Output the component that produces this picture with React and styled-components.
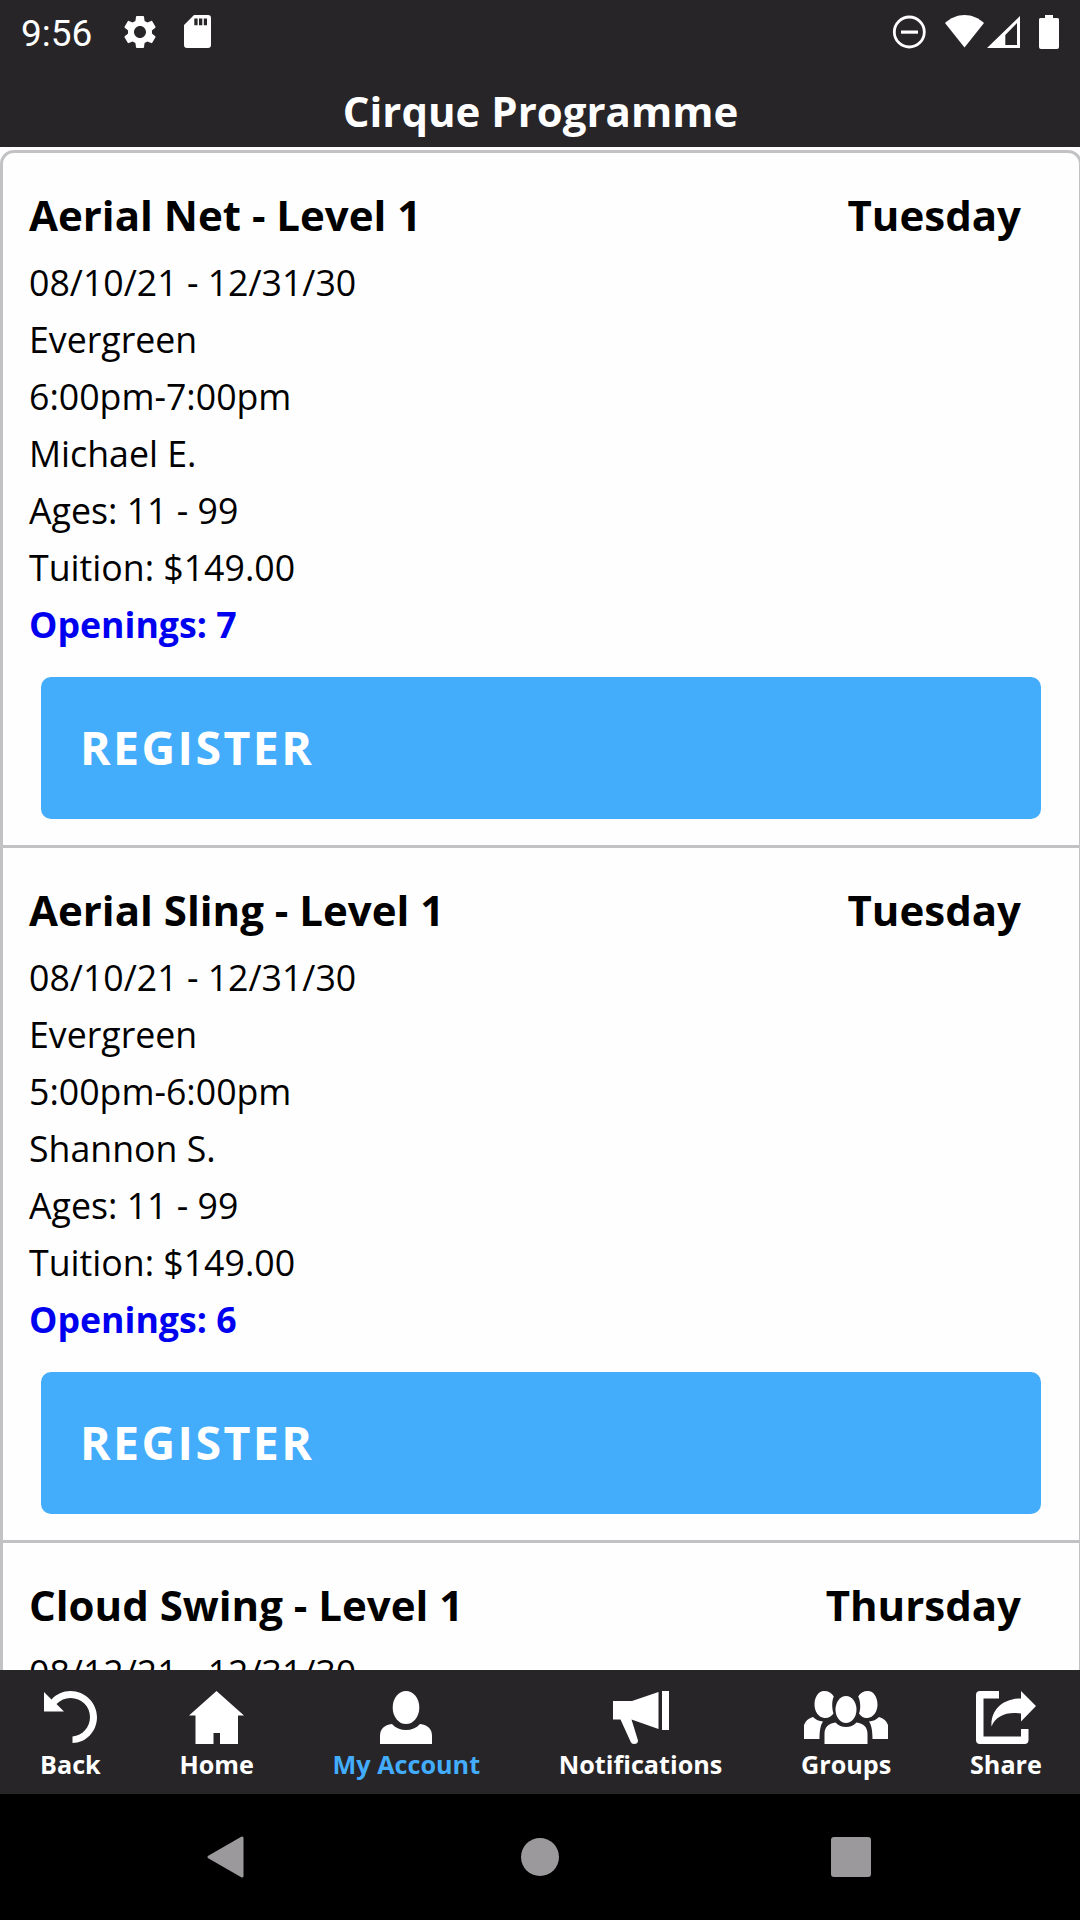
import styled, { createGlobalStyle } from "styled-components";

const classes = [
  {
    name: "Aerial Net - Level 1",
    day: "Tuesday",
    details: [
      "08/10/21 - 12/31/30",
      "Evergreen",
      "6:00pm-7:00pm",
      "Michael E.",
      "Ages: 11 - 99",
      "Tuition: $149.00",
    ],
    openings: 7,
  },
  {
    name: "Aerial Sling - Level 1",
    day: "Tuesday",
    details: [
      "08/10/21 - 12/31/30",
      "Evergreen",
      "5:00pm-6:00pm",
      "Shannon S.",
      "Ages: 11 - 99",
      "Tuition: $149.00",
    ],
    openings: 6,
  },
  {
    name: "Cloud Swing - Level 1",
    day: "Thursday",
    details: ["08/12/21 - 12/31/30"],
  },
];

const tabs = [
  { label: "Back", icon: BackIcon },
  { label: "Home", icon: HomeIcon },
  { label: "My Account", icon: AccountIcon, active: true },
  { label: "Notifications", icon: MegaphoneIcon },
  { label: "Groups", icon: GroupsIcon },
  { label: "Share", icon: ShareIcon },
];

export default function App() {
  return (
    <Screen>
      <GlobalStyle />
      <Header>
        <StatusBar>
          <Clock>9:56</Clock>
          <GearIcon />
          <SdCardIcon />
          <Spacer />
          <StatusIcons />
        </StatusBar>
        <Title>Cirque Programme</Title>
      </Header>
      <Content>
        <List>
          {classes.map((item) => (
            <ClassItem key={item.name} {...item} />
          ))}
        </List>
      </Content>
      <TabBar>
        {tabs.map(({ label, icon: Icon, active }) => (
          <Tab key={label} $active={active}>
            <Icon />
            <span>{label}</span>
          </Tab>
        ))}
      </TabBar>
      <SystemNav>
        <svg width="40" height="44" viewBox="0 0 40 44">
          <path
            d="M36 3 V41 L3 22 Z"
            transform="translate(1 0)"
            strokeWidth="3"
            strokeLinejoin="round"
          />
        </svg>
        <HomeDot />
        <RecentsSquare />
      </SystemNav>
    </Screen>
  );
}

function ClassItem({ name, day, details, openings }) {
  return (
    <Item>
      <ItemHeader>
        <h2>{name}</h2>
        <h2>{day}</h2>
      </ItemHeader>
      {details.map((line) => (
        <Detail key={line}>{line}</Detail>
      ))}
      {openings && (
        <>
          <Openings>Openings: {openings}</Openings>
          <RegisterButton>REGISTER</RegisterButton>
        </>
      )}
    </Item>
  );
}

function GearIcon() {
  return (
    <GearSvg width="40" height="40" viewBox="0 0 24 24">
      <path d="M19.14 12.94c.04-.3.06-.61.06-.94 0-.32-.02-.64-.07-.94l2.03-1.58c.18-.14.23-.41.12-.61l-1.92-3.32c-.12-.22-.37-.29-.59-.22l-2.39.96c-.5-.38-1.03-.7-1.62-.94l-.36-2.54c-.04-.24-.24-.41-.48-.41h-3.84c-.24 0-.43.17-.47.41l-.36 2.54c-.59.24-1.13.57-1.62.94l-2.39-.96c-.22-.08-.47 0-.59.22L2.74 8.87c-.12.21-.08.47.12.61l2.03 1.58c-.05.3-.09.63-.09.94s.02.64.07.94l-2.03 1.58c-.18.14-.23.41-.12.61l1.92 3.32c.12.22.37.29.59.22l2.39-.96c.5.38 1.03.7 1.62.94l.36 2.54c.05.24.24.41.48.41h3.84c.24 0 .44-.17.47-.41l.36-2.54c.59-.24 1.13-.56 1.62-.94l2.39.96c.22.08.47 0 .59-.22l1.92-3.32c.12-.22.07-.47-.12-.61l-2.01-1.58zM12 15.6c-1.98 0-3.6-1.62-3.6-3.6s1.62-3.6 3.6-3.6 3.6 1.62 3.6 3.6-1.62 3.6-3.6 3.6z" />
    </GearSvg>
  );
}

function SdCardIcon() {
  return (
    <SdSvg width="27" height="33" viewBox="0 0 27 33">
      <path
        fillRule="evenodd"
        d="M10 0H24Q27 0 27 3V30Q27 33 24 33H3Q0 33 0 30V10ZM10.300 3.500V10.200H13.600V3.500ZM15 3.500V10.200H18.300V3.500ZM19.800 3.500V10.200H23V3.500Z"
      />
    </SdSvg>
  );
}

// do not disturb, wifi, signal and battery
function StatusIcons() {
  return (
    <svg width="172" height="36" viewBox="-4 0 172 36">
      <circle cx="14.300" cy="18" r="15" fill="none" stroke="#fff" strokeWidth="2.800" />
      <rect x="6" y="16.500" width="17" height="3.200" />
      <path d="M69.500 1C77 1 83.500 4 89 9L69.500 33.500L50 9C55.500 4 62 1 69.500 1Z" />
      <path
        fillRule="evenodd"
        d="M125 2V34H92ZM122 9L110.300 21V31H122Z"
      />
      <path d="M150 1H158V4H162.500Q164 4 164 5.500V33Q164 35 162 35H146Q144 35 144 33V5.500Q144 4 145.500 4H150Z" />
    </svg>
  );
}

function BackIcon() {
  return (
    <svg width="53" height="53" viewBox="0 0 53 53">
      <path d="M0 1L7.500 8.500C12.500 3 19 0 26.500 0C41 0 53 12 53 26C53 40.500 42 52 28.500 52V45.500C38.500 44.500 46 36.500 46 26C46 15.500 37.500 7 26.500 7C21 7 16.500 9 12.500 13L20 20.500H0Z" />
    </svg>
  );
}

function HomeIcon() {
  return (
    <svg width="55" height="53" viewBox="0 0 55 53">
      <path d="M27.500 0L55 24.500H49V53H31V42H24.500V53H6.500V24.500H0Z" />
    </svg>
  );
}

function AccountIcon() {
  return (
    <svg width="52" height="53" viewBox="0 0 52 53">
      <ellipse cx="26" cy="16.500" rx="13.300" ry="16.500" />
      <path d="M0 53V45C0 38 4 34 12 33C19 41 33 41 40 33C48 34 52 38 52 45V53Z" />
    </svg>
  );
}

function MegaphoneIcon() {
  return (
    <svg width="56" height="53" viewBox="0 0 56 53">
      <path d="M0 10H19L45.500 1V38L18.500 28.500L25 49.500Q25 53 21 53Q18.500 53 17.500 50.500L7.500 28.500H0Z" />
      <rect x="49" y="0" width="7" height="39" />
    </svg>
  );
}

function GroupsIcon() {
  return (
    <svg width="84" height="53" viewBox="0 0 84 53">
      <path d="M20 0C24.500 0 28 2 29.800 5.500C27.500 10 28 18 29.500 22.500C27.500 25.500 24 27.500 20.500 27C14.500 26.500 10.500 20.500 10.500 13.500C10.500 6 14.500 0 20 0Z" />
      <path d="M64 0C59.500 0 56 2 54.200 5.500C56.500 10 57 18 55 22.500C57 25.500 60 27.500 63.500 27C69.500 26.500 73.500 20.500 73.500 13.500C73.500 6 69.500 0 64 0Z" />
      <ellipse cx="42" cy="18.500" rx="10.500" ry="13.500" />
      <path d="M20.500 53V43C20.500 36 24.500 32.500 31.500 31.500C37 37.500 47 37.500 52.500 31.500C59.500 32.500 63.500 36 63.500 43V53Z" />
      <path d="M0 48V34Q2 28 9 26Q13 30 19 30.500C16.500 34 15.500 40 15.500 48Z" />
      <path d="M84 48V34Q82 28 75 26Q71 30 65 30.500C67.500 34 68.500 40 68.500 48Z" />
    </svg>
  );
}

function ShareIcon() {
  return (
    <svg width="60" height="53" viewBox="0 0 60 53">
      <path d="M4 0H23V7.500H7.500V45.500H45V38H52.500V49Q52.500 53 48.500 53H4Q0 53 0 49V4Q0 0 4 0Z" />
      <path d="M45 0L60 15L45 30.500V22.500C30 20.500 20 25 15.500 35.500C14.500 20 26 7.500 45 7.500Z" />
    </svg>
  );
}

const GlobalStyle = createGlobalStyle`
  * {
    box-sizing: border-box;
  }

  body {
    margin: 0;
    background-color: #000;
    font-family: "Open Sans", sans-serif;
  }
`;

const Screen = styled.div`
  display: flex;
  flex-direction: column;
  width: 1080px;
  height: 1920px;
  overflow: hidden;
`;

const Header = styled.header`
  height: 147px;
  background-color: #272528;
  color: #fff;
`;

const StatusBar = styled.div`
  display: flex;
  align-items: center;
  height: 63px;
  padding-left: 21px;
  padding-right: 17px;

  svg {
    fill: #fff;
  }
`;

const Clock = styled.span`
  width: 99px;
  font-family: Roboto, sans-serif;
  font-size: 37px;
  line-height: 63px;
  padding-top: 3px;
`;

const GearSvg = styled.svg`
  margin-right: 24px;
`;

const SdSvg = styled.svg`
  flex: none;
`;

const Spacer = styled.div`
  flex: 1;
`;

const Title = styled.h1`
  margin: 0;
  padding-left: 1px;
  font-size: 42px;
  line-height: 96px;
  font-weight: bold;
  text-align: center;
`;

const Content = styled.main`
  height: 1523px;
  padding-top: 3px;
  background-color: #fff;
  overflow: hidden;
`;

const List = styled.div`
  width: 1082px;
  height: 1700px;
  border: 3px solid #c2c1c4;
  border-radius: 14px;
  background-color: #fefefe;
`;

const Item = styled.section`
  display: flex;
  flex-direction: column;
  height: 695px;
  padding: 31px 38px 0 26px;
  border-bottom: 3px solid #c2c1c4;
`;

const ItemHeader = styled.div`
  display: flex;
  justify-content: space-between;
  padding-right: 20px;
  margin-bottom: 8px;

  h2 {
    margin: 0;
    font-size: 42px;
    line-height: 62px;
    font-weight: bold;
  }
`;

const Detail = styled.p`
  margin: 0;
  font-size: 35.7px;
  line-height: 57px;
`;

const Openings = styled(Detail)`
  color: #0000f0;
  font-weight: bold;
`;

const RegisterButton = styled.button`
  height: 142px;
  margin: 24px 0 0 12px;
  padding: 0 39px 2px;
  border: none;
  border-radius: 10px;
  background-color: #43adfc;
  color: #fff;
  font-family: inherit;
  font-size: 46.5px;
  font-weight: bold;
  letter-spacing: 2.4px;
  text-align: left;
`;

const TabBar = styled.nav`
  display: flex;
  justify-content: space-between;
  height: 124px;
  padding: 21px 38px 0 40px;
  background-color: #272528;
`;

const Tab = styled.a`
  display: flex;
  flex-direction: column;
  align-items: center;
  color: ${(props) => (props.$active ? "#43adfc" : "#fff")};
  font-size: 25.2px;
  line-height: 34px;
  font-weight: bold;

  svg {
    fill: #fff;
    margin-bottom: 3px;
  }
`;

const SystemNav = styled.div`
  display: flex;
  align-items: center;
  justify-content: space-between;
  height: 126px;
  padding: 0 209px 0 205px;
  background-color: #000;

  svg {
    fill: #9b999c;
    stroke: #9b999c;
  }
`;

const HomeDot = styled.div`
  width: 38px;
  height: 38px;
  margin-left: 4px;
  border-radius: 50%;
  background-color: #9b999c;
`;

const RecentsSquare = styled.div`
  width: 40px;
  height: 40px;
  border-radius: 3px;
  background-color: #9b999c;
`;
